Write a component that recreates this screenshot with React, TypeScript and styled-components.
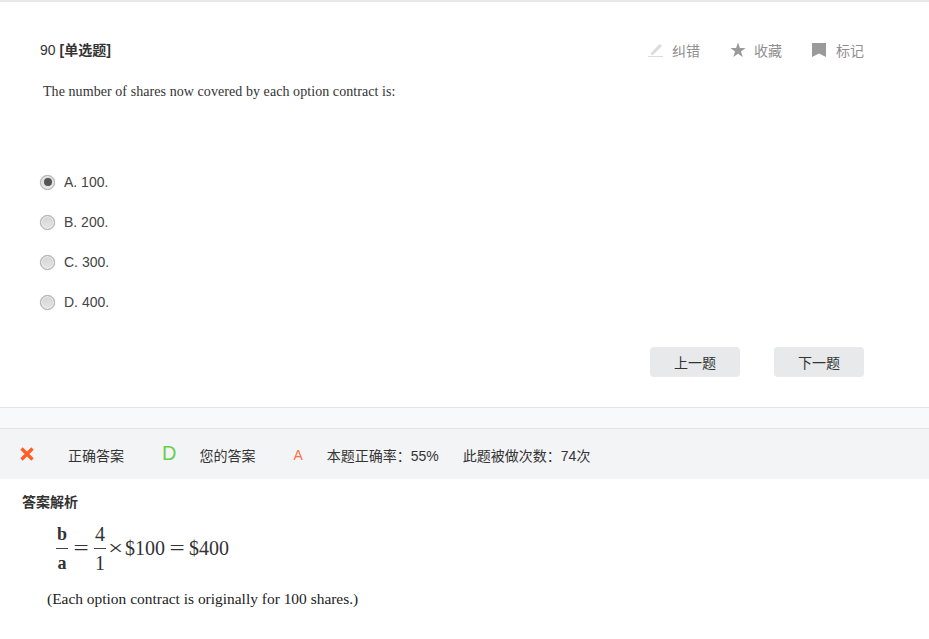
import React from "react";
import styled, { createGlobalStyle } from "styled-components";

const sans = `"Liberation Sans", "Noto Sans CJK SC", sans-serif`;
const serif = `"Liberation Serif", "Noto Sans CJK SC", serif`;

const GlobalStyle = createGlobalStyle`
  html, body {
    margin: 0;
    padding: 0;
    background: #fff;
    font-family: ${sans};
    font-size: 14px;
    color: #333;
  }
`;

const Page = styled.div`
  width: 929px;
  height: 639px;
  overflow: hidden;
  border-top: 2px solid #e9e9e9;
  box-sizing: border-box;
`;

const Question = styled.section`
  height: 405px;
  box-sizing: border-box;
  padding: 36px 65px 0 40px;
`;

const QuestionHead = styled.div`
  display: flex;
  justify-content: space-between;
  align-items: center;
  height: 22px;
`;

const QuestionNo = styled.div`
  font-size: 14px;
  color: #333;

  b {
    font-weight: 700;
  }
`;

const Tools = styled.div`
  display: flex;
  gap: 30px;
  margin-top: 2px;
`;

const Tool = styled.div`
  display: flex;
  align-items: center;
  gap: 8px;
  color: #8f8f8f;
  font-size: 14px;
`;

const Stem = styled.p`
  margin: 22px 0 0 3px;
  font-family: ${serif};
  font-size: 14px;
  line-height: 20px;
  letter-spacing: 0.07px;
  color: #333;
`;

const Options = styled.div`
  margin-top: 70px;
  display: flex;
  flex-direction: column;
  gap: 20px;
`;

const Option = styled.div`
  display: flex;
  align-items: center;
  gap: 9px;
  height: 20px;
  font-size: 14px;
  color: #444;
`;

const Radio = styled.span<{ $checked?: boolean }>`
  box-sizing: border-box;
  width: 15px;
  height: 15px;
  border-radius: 50%;
  border: 1px solid #a8a8a8;
  background: linear-gradient(#d4d4d4, #e6e6e6);
  box-shadow: inset 0 0 0 1px #ececec, 0 0 1px #bbb;
  display: flex;
  align-items: center;
  justify-content: center;

  &::after {
    content: "";
    display: ${({ $checked }) => ($checked ? "block" : "none")};
    width: 8px;
    height: 8px;
    border-radius: 50%;
    background: #555;
  }
`;

const Pager = styled.div`
  margin-top: 35px;
  display: flex;
  justify-content: flex-end;
  gap: 34px;
`;

const PageButton = styled.button`
  width: 90px;
  height: 30px;
  border: none;
  border-radius: 4px;
  background: #e8e9eb;
  color: #333;
  font-family: ${sans};
  font-size: 14px;
  padding: 0;
`;

const Strip = styled.div`
  height: 20px;
  background: #f8f9fb;
  border-top: 1px solid #e4e4e4;
  border-bottom: 1px solid #e4e4e6;
`;

const ResultBar = styled.div`
  height: 50px;
  background: #f3f4f6;
  display: flex;
  align-items: center;
  padding-left: 20px;
  font-size: 14px;
  color: #333;
`;

const Wrong = styled.svg`
  width: 14px;
  height: 14px;
  margin: 0 34px 0 0;
`;

const Letter = styled.span<{ $big?: boolean; $color: string; $left: number }>`
  color: ${({ $color }) => $color};
  font-size: ${({ $big }) => ($big ? "20px" : "14px")};
  margin-left: ${({ $left }) => $left}px;
  margin-top: ${({ $big }) => ($big ? "-1px" : "1px")};
`;

const BarText = styled.span<{ $left: number }>`
  margin-left: ${({ $left }) => $left}px;
  position: relative;
  top: 1px;
`;

const Analysis = styled.section`
  padding: 14px 0 0 22px;
`;

const AnalysisTitle = styled.div`
  font-size: 14px;
  font-weight: 700;
  color: #333;
  line-height: 18px;
`;

const Formula = styled.div`
  display: flex;
  align-items: center;
  margin: 8px 0 0 34px;
  height: 58px;
  font-family: ${serif};
  font-size: 20px;
  color: #333;
`;

const Fraction = styled.span`
  display: inline-flex;
  flex-direction: column;
  align-items: center;
  width: 12px;
  line-height: 28px;
  font-size: 20px;

  b {
    font-size: 18px;
  }
`;

const Over = styled.span`
  border-top: 1px solid #444;
  width: 100%;
`;

const Operator = styled.span<{ $width: number }>`
  display: inline-block;
  width: ${({ $width }) => $width}px;
  text-align: center;
  transform: scaleX(1.35);
`;

const Explain = styled.p`
  margin: 12px 0 0 25px;
  font-family: ${serif};
  font-size: 15.45px;
  line-height: 20px;
  color: #222;
`;

const App = () => {
  return (
    <Page>
      <GlobalStyle />
      <Question>
        <QuestionHead>
          <QuestionNo>
            90 <b>[单选题]</b>
          </QuestionNo>
          <Tools>
            <Tool>
              <svg width="16" height="16" viewBox="0 0 16 16">
                <path d="M3 11 L11.5 2 L14 4 L5.5 12.5 L3 13 Z" fill="#dcdcdc" />
                <rect x="0" y="14" width="15" height="1" fill="#dcdcdc" />
              </svg>
              纠错
            </Tool>
            <Tool>
              <svg width="16" height="16" viewBox="0 0 16 16">
                <path
                  d="M8 .5 L9.9 5.9 L15.6 6 L11 9.5 L12.7 15 L8 11.7 L3.3 15 L5 9.5 L.4 6 L6.1 5.9 Z"
                  fill="#9a9a9a"
                />
              </svg>
              收藏
            </Tool>
            <Tool>
              <svg width="16" height="16" viewBox="0 0 16 16">
                <path d="M0 1 H14 V15 L7 11.5 L0 15 Z" fill="#9a9a9a" />
              </svg>
              标记
            </Tool>
          </Tools>
        </QuestionHead>
        <Stem>The number of shares now covered by each option contract is:</Stem>
        <Options>
          <Option>
            <Radio $checked />
            A. 100.
          </Option>
          <Option>
            <Radio />
            B. 200.
          </Option>
          <Option>
            <Radio />
            C. 300.
          </Option>
          <Option>
            <Radio />
            D. 400.
          </Option>
        </Options>
        <Pager>
          <PageButton>上一题</PageButton>
          <PageButton>下一题</PageButton>
        </Pager>
      </Question>
      <Strip />
      <ResultBar>
        <Wrong viewBox="0 0 14 14">
          <path d="M1.5 1.5 L12.5 12.5 M12.5 1.5 L1.5 12.5" stroke="#ff5f22" strokeWidth="3.4" />
        </Wrong>
        <BarText $left={0}>正确答案</BarText>
        <Letter $big $color="#69cf4f" $left={38}>
          D
        </Letter>
        <BarText $left={23}>您的答案</BarText>
        <Letter $color="#ff7043" $left={38}>
          A
        </Letter>
        <BarText $left={24}>本题正确率：55%</BarText>
        <BarText $left={24}>此题被做次数：74次</BarText>
      </ResultBar>
      <Analysis>
        <AnalysisTitle>答案解析</AnalysisTitle>
        <Formula>
          <Fraction>
            <b>b</b>
            <Over />
            <b>a</b>
          </Fraction>
          <Operator $width={26}>=</Operator>
          <Fraction>
            4
            <Over />1
          </Fraction>
          <Operator $width={19}>×</Operator>
          $100
          <Operator $width={24}>=</Operator>
          $400
        </Formula>
        <Explain>(Each option contract is originally for 100 shares.)</Explain>
      </Analysis>
    </Page>
  );
};

export default App;
